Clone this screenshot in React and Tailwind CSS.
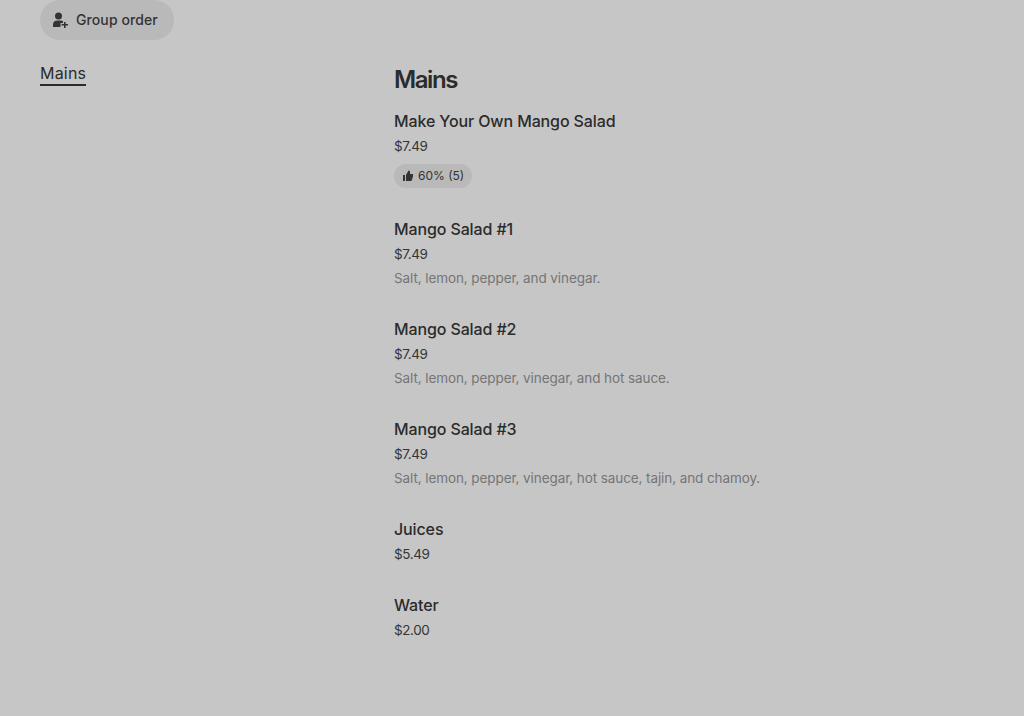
import React from 'react';

const font = { fontFamily: 'Inter, sans-serif' };

const items = [
  { name: 'Make Your Own Mango Salad', price: '$7.49', rating: '60% (5)' },
  { name: 'Mango Salad #1', price: '$7.49', desc: 'Salt, lemon, pepper, and vinegar.' },
  { name: 'Mango Salad #2', price: '$7.49', desc: 'Salt, lemon, pepper, vinegar, and hot sauce.' },
  { name: 'Mango Salad #3', price: '$7.49', desc: 'Salt, lemon, pepper, vinegar, hot sauce, tajin, and chamoy.' },
  { name: 'Juices', price: '$5.49' },
  { name: 'Water', price: '$2.00' },
];

function GroupIcon() {
  return (
    <svg width="16" height="16" viewBox="0 0 16 16" fill="currentColor">
      <circle cx="6.500" cy="4" r="3.500" />
      <path d="M1 15v-2.500C1 10 3 8.500 5.500 8.500h3c1 0 1.900.2 2.500.7V11H8.500v4H1z" />
      <path d="M12 10h1.600v2H16v1.600h-2.400V16H12v-2.400H9.500V12H12v-2z" />
    </svg>
  );
}

function ThumbIcon() {
  return (
    <svg width="12" height="12" viewBox="0 0 12 12" fill="currentColor">
      <path d="M1 5h2v6H1z" />
      <path d="M4 5l2.500-4.500c.9 0 1.500.6 1.500 1.500v2h3v2.500L9.500 11H4V5z" />
    </svg>
  );
}

function MenuItem({ item }) {
  return (
    <div className="pb-[27px]">
      <div className="text-[16px] leading-[25px] font-medium tracking-[-0.12px] text-[#2b2b2b]">{item.name}</div>
      <div className="text-[13.5px] leading-[24px] tracking-[-0.4px] text-[#353535]">{item.price}</div>
      {item.desc && <div className="text-[13.5px] leading-[24px] tracking-[-0.09px] text-[#757575]">{item.desc}</div>}
      {item.rating && (
        <div className="mt-[6px] mb-[2px] flex">
          <div className="flex h-[24px] items-center gap-[4px] rounded-full bg-[#b9b9b9] px-[8px] text-[12px] text-[#333333]">
            <ThumbIcon />
            {item.rating}
          </div>
        </div>
      )}
    </div>
  );
}

export default function App() {
  return (
    <div className="min-h-screen bg-[#c6c6c6] px-[40px]" style={font}>
      <div className="flex">
        <button className="flex h-[40px] items-center gap-[8px] rounded-full bg-[#b9b9b9] pb-[1px] pl-[12px] pr-[16px] text-[14px] font-medium tracking-[0.1px] text-[#333333]">
          <GroupIcon />
          Group order
        </button>
      </div>
      <div className="flex pt-[21px]">
        <div className="w-[354px] shrink-0">
          <span className="inline-block h-[24px] border-b-2 border-[#2b2b2b] text-[16px] leading-[22px] tracking-[0.2px] text-[#2b2b2b]">Mains</span>
        </div>
        <div>
          <h2 className="mb-[10px] text-[24px] leading-[38px] font-semibold tracking-[-1.400px] text-[#2b2b2b]">Mains</h2>
          {items.map((item) => (
            <MenuItem key={item.name} item={item} />
          ))}
        </div>
      </div>
    </div>
  );
}
